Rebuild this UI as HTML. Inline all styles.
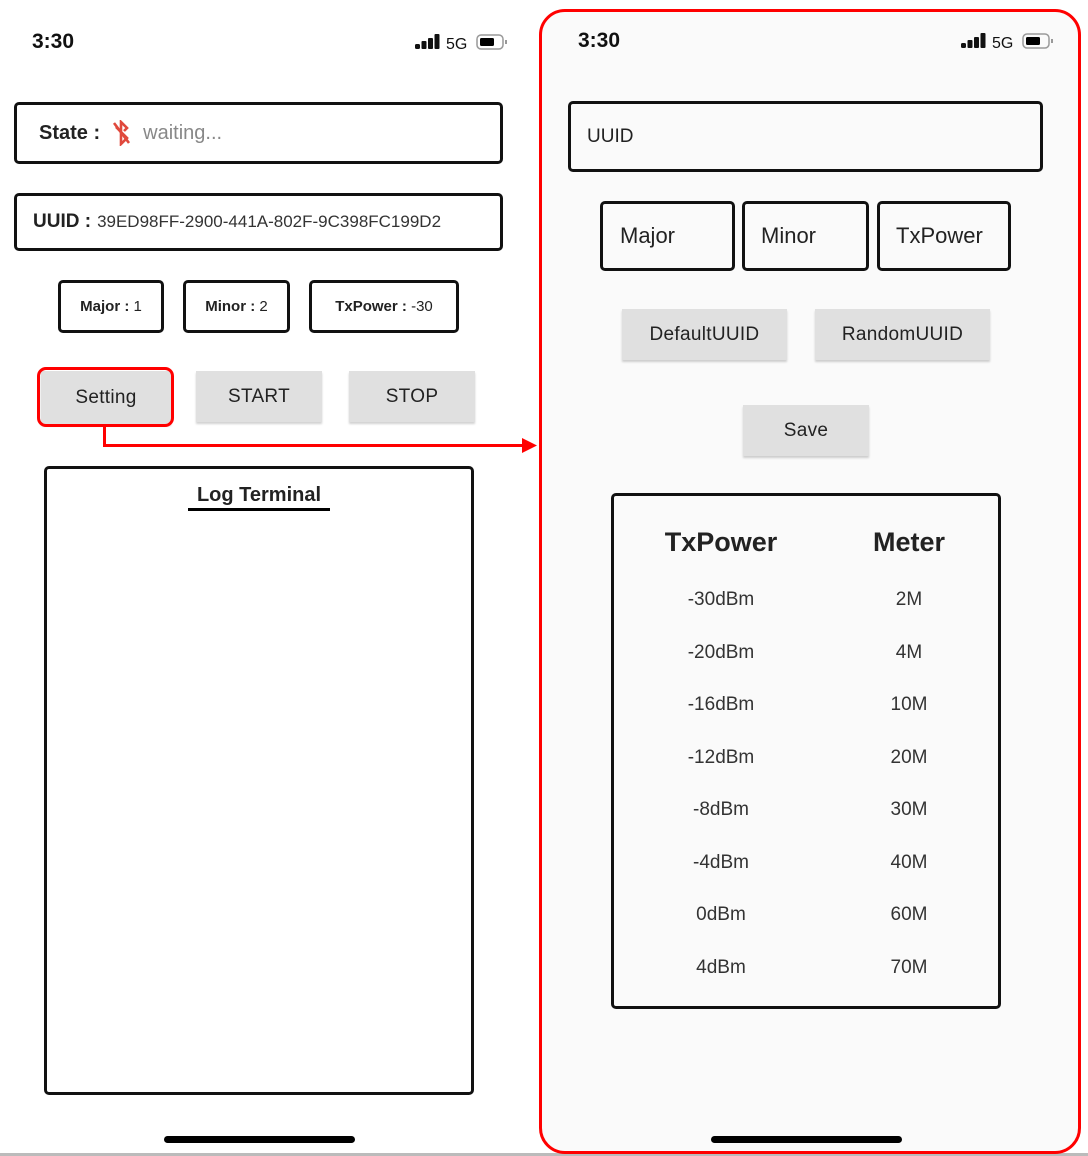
<!DOCTYPE html>
<html><head><meta charset="utf-8"><style>
*{box-sizing:border-box;margin:0;padding:0}
body{width:1088px;height:1156px;background:#fff;position:relative;overflow:hidden;font-family:"Liberation Sans",sans-serif;color:#222}
.a{position:absolute}
.box{position:absolute;border:3px solid #111;border-radius:5px;display:flex;align-items:center}
.btn{position:absolute;background:#e0e0e0;box-shadow:0 2px 2px rgba(0,0,0,.18);display:flex;align-items:center;justify-content:center;font-size:19px;color:#222;letter-spacing:.3px}
.time{position:absolute;font-size:21px;font-weight:bold;color:#111}
.row{position:absolute;font-size:19px;color:#333;width:200px;text-align:center}
.hb{position:absolute;height:7px;background:#000;border-radius:4px}
</style></head><body>

<!-- LEFT -->
<div class="time" style="left:32px;top:30px">3:30</div>
<svg class="a" style="left:414px;top:32px" width="96" height="20" viewBox="0 0 96 20">
<rect x="1" y="12" width="5" height="5" rx="1.5" fill="#111"/><rect x="7.5" y="9" width="5" height="8" rx="1" fill="#111"/><rect x="14" y="6" width="5" height="11" rx="1" fill="#111"/><rect x="20.5" y="2" width="5" height="15" rx="1" fill="#111"/>
<text x="32" y="17" font-family="Liberation Sans" font-size="16" fill="#111">5G</text>
<rect x="63" y="3" width="26" height="14" rx="4" fill="none" stroke="#999" stroke-width="1.5"/><rect x="66" y="6" width="14" height="8" rx="1.5" fill="#000"/><rect x="91" y="8" width="2" height="4" fill="#999"/></svg>

<div class="box" style="left:14px;top:102px;width:489px;height:62px;padding-left:22px;font-size:20px">
<b style="color:#222">State :</b>
<svg style="margin:0 10px 0 11px" width="22" height="26" viewBox="0 0 22 26"><path d="M5 7 L16 18 L10 24 L10 2 L16 8 L13 11" fill="none" stroke="#e0483c" stroke-width="2.6"/><path d="M3 3 L18 23" stroke="#e0483c" stroke-width="2.6"/></svg>
<span style="color:#888">waiting...</span></div>

<div class="box" style="left:14px;top:193px;width:489px;height:58px;padding-left:16px;font-size:17px">
<b style="font-size:19px;margin-right:6px">UUID :</b><span style="color:#333">39ED98FF-2900-441A-802F-9C398FC199D2</span></div>

<div class="box" style="left:58px;top:280px;width:106px;height:53px;justify-content:center;font-size:15px"><b>Major :</b>&nbsp;1</div>
<div class="box" style="left:183px;top:280px;width:107px;height:53px;justify-content:center;font-size:15px"><b>Minor :</b>&nbsp;2</div>
<div class="box" style="left:309px;top:280px;width:150px;height:53px;justify-content:center;font-size:15px"><b>TxPower :</b>&nbsp;-30</div>

<div class="btn" style="left:41px;top:371px;width:130px;height:53px">Setting</div>
<div class="a" style="left:37px;top:367px;width:137px;height:60px;border:3px solid #f00;border-radius:9px"></div>
<div class="btn" style="left:196px;top:371px;width:126px;height:51px">START</div>
<div class="btn" style="left:349px;top:371px;width:126px;height:51px">STOP</div>

<div class="a" style="left:103px;top:426px;width:3px;height:21px;background:#f00"></div>
<div class="a" style="left:103px;top:444px;width:423px;height:3px;background:#f00"></div>
<svg class="a" style="left:522px;top:438px" width="16" height="15"><path d="M0 0 L15 7.5 L0 15Z" fill="#f00"/></svg>

<div class="box" style="left:44px;top:466px;width:430px;height:629px;display:block"></div>
<div class="a" style="left:44px;top:484px;width:430px;text-align:center;font-size:20px;font-weight:bold;color:#222">Log Terminal</div>
<div class="a" style="left:188px;top:508px;width:142px;height:3px;background:#000"></div>

<div class="hb" style="left:164px;top:1136px;width:191px"></div>
<div class="a" style="left:0;top:1153px;width:1088px;height:3px;background:#bbb"></div>

<!-- RIGHT -->
<div class="a" style="left:539px;top:9px;width:542px;height:1145px;border:3px solid #f00;border-radius:26px;background:#fafafa"></div>
<div class="time" style="left:578px;top:29px">3:30</div>
<svg class="a" style="left:960px;top:31px" width="96" height="20" viewBox="0 0 96 20">
<rect x="1" y="12" width="5" height="5" rx="1.5" fill="#111"/><rect x="7.5" y="9" width="5" height="8" rx="1" fill="#111"/><rect x="14" y="6" width="5" height="11" rx="1" fill="#111"/><rect x="20.5" y="2" width="5" height="15" rx="1" fill="#111"/>
<text x="32" y="17" font-family="Liberation Sans" font-size="16" fill="#111">5G</text>
<rect x="63" y="3" width="26" height="14" rx="4" fill="none" stroke="#999" stroke-width="1.5"/><rect x="66" y="6" width="14" height="8" rx="1.5" fill="#000"/><rect x="91" y="8" width="2" height="4" fill="#999"/></svg>

<div class="box" style="left:568px;top:101px;width:475px;height:71px;padding-left:16px;font-size:19px;color:#222">UUID</div>
<div class="box" style="left:600px;top:201px;width:135px;height:70px;padding-left:17px;font-size:22px">Major</div>
<div class="box" style="left:742px;top:201px;width:127px;height:70px;padding-left:16px;font-size:22px">Minor</div>
<div class="box" style="left:877px;top:201px;width:134px;height:70px;padding-left:16px;font-size:22px">TxPower</div>

<div class="btn" style="left:622px;top:309px;width:165px;height:51px">DefaultUUID</div>
<div class="btn" style="left:815px;top:309px;width:175px;height:51px">RandomUUID</div>
<div class="btn" style="left:743px;top:405px;width:126px;height:51px">Save</div>

<div class="box" style="left:611px;top:493px;width:390px;height:516px;display:block"></div>
<div class="a" style="left:621px;top:527px;width:200px;text-align:center;font-size:27px;font-weight:bold;color:#222">TxPower</div>
<div class="a" style="left:809px;top:527px;width:200px;text-align:center;font-size:27px;font-weight:bold;color:#222">Meter</div>

<div class="row" style="left:621px;top:589px">-30dBm</div><div class="row" style="left:809px;top:589px">2M</div>
<div class="row" style="left:621px;top:642px">-20dBm</div><div class="row" style="left:809px;top:642px">4M</div>
<div class="row" style="left:621px;top:694px">-16dBm</div><div class="row" style="left:809px;top:694px">10M</div>
<div class="row" style="left:621px;top:747px">-12dBm</div><div class="row" style="left:809px;top:747px">20M</div>
<div class="row" style="left:621px;top:799px">-8dBm</div><div class="row" style="left:809px;top:799px">30M</div>
<div class="row" style="left:621px;top:852px">-4dBm</div><div class="row" style="left:809px;top:852px">40M</div>
<div class="row" style="left:621px;top:904px">0dBm</div><div class="row" style="left:809px;top:904px">60M</div>
<div class="row" style="left:621px;top:957px">4dBm</div><div class="row" style="left:809px;top:957px">70M</div>

<div class="hb" style="left:711px;top:1136px;width:191px"></div>
</body></html>
